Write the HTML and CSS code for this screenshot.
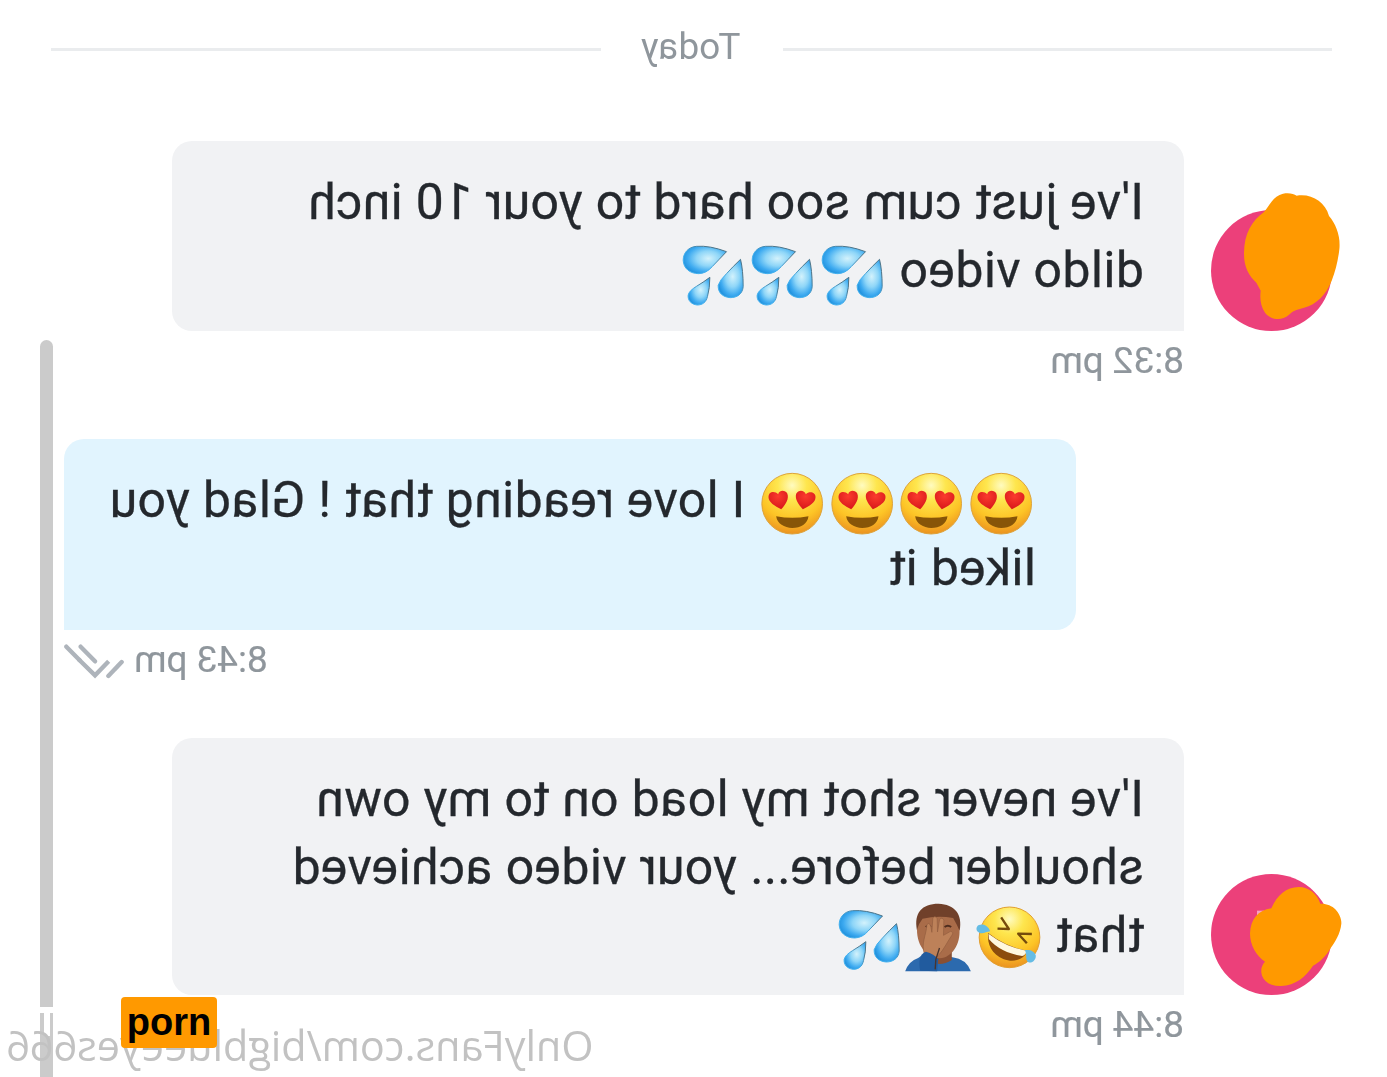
FILE: index.html
```html
<!DOCTYPE html>
<html lang="en">
<head>
<meta charset="utf-8">
<title>Chat</title>
<link rel="stylesheet" href="styles.css">
</head>
<body>
<svg class="defs" width="0" height="0">
  <defs>
    <radialGradient id="gDrop" cx="0.58" cy="0.45" r="0.6"><stop offset="0" stop-color="#d3f2fc"/><stop offset="0.45" stop-color="#8fd6f8"/><stop offset="0.8" stop-color="#3daaf0"/><stop offset="1" stop-color="#2494df"/></radialGradient>
    <linearGradient id="gEdge" x1="0" y1="1" x2="1" y2="0"><stop offset="0.4" stop-color="#41b0ee"/><stop offset="0.75" stop-color="#4e7487"/></linearGradient>
    <radialGradient id="gFace" cx="0.5" cy="0.2" r="0.8"><stop offset="0" stop-color="#fffbc0"/><stop offset="0.3" stop-color="#fee64e"/><stop offset="0.7" stop-color="#fdc426"/><stop offset="1" stop-color="#eb9220"/></radialGradient>
    <radialGradient id="gHeart" cx="0.5" cy="0.3" r="0.7"><stop offset="0" stop-color="#fb3b2d"/><stop offset="1" stop-color="#d8171b"/></radialGradient>
    <g id="drops" fill="url(#gDrop)" stroke="url(#gEdge)" stroke-width="3" stroke-linejoin="round">
      <path d="M165 50Q115 31 75 34C50 36 35 54 35 76C36 101 56 116 82 116Q105 115 122 95Q140 76 165 50Z"/>
      <path d="M207 73Q215 105 215 155C213 177 197 188 176 188C153 186 139 173 140 151Q145 135 165 116Q185 94 207 73Z"/>
      <path d="M115 127Q115 160 108 184C104 202 93 210 77 210C59 208 48 196 50 180Q53 167 75 154Q95 142 115 127Z"/>
    </g>
    <g id="love">
      <circle cx="125" cy="131" r="91" fill="url(#gFace)" stroke="#dda33c" stroke-width="3"/>
      <path d="M92 148C72 138 54 127 54 112C53 95 72 91 83 103C84 90 104 88 110 100C117 116 105 134 92 148Z" fill="url(#gHeart)"/>
      <path d="M157 148C144 134 132 116 137 101C144 88 162 90 166 103C177 92 195 97 195 112C195 128 176 138 157 148Z" fill="url(#gHeart)"/>
      <path d="M77 169Q125 178 174 169C171 192 151 204 125 204C101 203 80 192 77 169Z" fill="#875508"/>
    </g>
  </defs>
</svg>
<main class="chat">
  <div class="day"><span class="rule"></span><span class="day-name">Today</span><span class="rule"></span></div>

  <section class="message incoming">
    <div class="row">
      <div class="avatar">
        <svg class="blob" viewBox="49 88 363 363"><path fill="#ff9900" d="M208 94C222 77 235 46 265 39C283 36 297 39 306 45C350 38 390 62 403 106C424 130 438 168 434 206C430 240 423 268 411 300C393 344 365 371 328 381C306 387 294 390 283 402C259 423 228 417 211 396C198 377 195 354 198 330L185 306C162 286 148 259 148 220C147 161 171 120 208 94Z"/></svg>
      </div>
      <div class="bubble"><p>I've just cum soo hard to your 10 inch<br>dildo video <svg class="emoji" viewBox="21 18 208.5 204"><use href="#drops"/></svg><svg class="emoji" viewBox="21 18 208.5 204"><use href="#drops"/></svg><svg class="emoji" viewBox="21 18 208.5 204"><use href="#drops"/></svg></p></div>
    </div>
    <div class="meta">8:32 pm</div>
  </section>

  <section class="message outgoing">
    <div class="row">
      <div class="bubble"><p><svg class="emoji" viewBox="21 33 208.5 204"><use href="#love"/></svg><svg class="emoji" viewBox="21 33 208.5 204"><use href="#love"/></svg><svg class="emoji" viewBox="21 33 208.5 204"><use href="#love"/></svg><svg class="emoji" viewBox="21 33 208.5 204"><use href="#love"/></svg> I love reading that ! Glad you<br>liked it</p></div>
    </div>
    <div class="meta">8:43 pm<svg class="ticks" viewBox="102 132 180 105" fill="none" stroke="#aeb4bb" stroke-width="13"><path stroke-linecap="round" d="M109 140L149 181M152 140L195 184M275 186L235 228"/><path d="M145 177L195 226L236 184"/></svg></div>
  </section>

  <section class="message incoming">
    <div class="row">
      <div class="avatar">
        <svg class="blob" viewBox="49 40 363 363"><path fill="#f7a1c3" d="M187 150H208V165H187Z"/><path fill="#ff9900" d="M230 143C247 102 275 80 312 79C343 79 366 99 377 129C412 127 439 154 440 189C437 220 420 244 408 262C394 286 375 305 355 315C333 349 302 374 259 376C219 377 196 354 200 324C202 315 205 309 211 303C183 286 166 252 166 218C167 176 190 148 230 143Z"/></svg>
      </div>
      <div class="bubble"><p>I've never shot my load on to my own<br>shoulder before... your video achieved<br>that <svg class="emoji" viewBox="441 31 208.5 204">
        <circle cx="549" cy="125" r="91" fill="url(#gFace)" stroke="#e19f31" stroke-width="3"/>
        <path d="M524 65L547 100L513 99M616 115L575 114L601 143" fill="none" stroke="#754b0c" stroke-width="7" stroke-linejoin="round"/>
        <path d="M485 112Q536 153 603 166C590 193 562 202 530 190C496 176 481 146 485 112Z" fill="#8c4c0d"/>
        <path d="M486 114Q536 153 602 166Q596 179 587 181Q520 170 487 130Z" fill="#fff8df"/>
        <path d="M491 107C484 88 470 83 457 88C446 94 448 108 460 112C470 115 480 108 491 107ZM595 164C608 160 624 166 628 180C628 193 617 203 606 200C594 195 603 177 595 164Z" fill="#65bce4"/>
      </svg><svg class="emoji" viewBox="237 31 208.5 204">
        <path d="M242 227Q252 197 281 187L306 170L384 185Q425 190 439 227Z" fill="#2c6aae"/>
        <path d="M300 150H382V193Q342 218 304 190Z" fill="#895034"/>
        <path d="M278 91C281 45 307 30 342 30C382 31 405 55 405 101C408 147 381 186 346 188C303 185 273 147 278 91Z" fill="#a96c49"/>
        <path d="M277 103C267 52 292 24 342 24C391 26 414 55 405 105Q398 88 386 67Q340 58 294 69Q283 82 277 103Z" fill="#70402a"/>
        <path d="M304 94Q311 87 319 94M360 94Q370 86 380 94" fill="none" stroke="#4f2d1e" stroke-width="6"/>
        <path d="M300 175C288 145 306 116 307 88Q313 77 319 92L322 110L325 67Q332 58 338 69L339 109L345 72Q353 62 358 74L357 119L378 107Q389 109 382 119C367 140 355 170 332 187Z" fill="#bd8159" stroke="#935d3f" stroke-width="2"/>
        <path d="M287 225C281 196 286 174 304 168Q329 174 341 191L338 227Z" fill="#215b9e"/>
        <path d="M345 157L334 191L332 221" fill="none" stroke="#49342e" stroke-width="4"/>
      </svg><svg class="emoji" viewBox="21 20 208.5 204"><use href="#drops"/></svg></p></div>
    </div>
    <div class="meta">8:44 pm</div>
  </section>

  <div class="scrollbar"><span class="notch"></span><span class="slot"></span></div>
  <div class="watermark">OnlyFans.com/bigblueeyes666</div>
  <div class="badge">porn</div>
</main>
</body>
</html>
```
FILE: styles.css
```css
* { box-sizing: border-box; }

body {
  margin: 0;
  background: #fff;
  font-family: Roboto, "Liberation Sans", sans-serif;
  overflow: hidden;
}

.defs { position: absolute; }

/* The whole conversation is flipped horizontally. */
.chat {
  position: relative;
  width: 1387px;
  height: 1077px;
  padding: 17px 51px 0 54.5px;
  overflow: hidden;
  transform: scaleX(-1);
}

.day {
  display: flex;
  align-items: center;
  height: 64px;
  margin-bottom: 60px;
}

.rule {
  flex: 1;
  height: 3px;
  background: #eaecee;
}

.day-name {
  width: 182px;
  text-align: center;
  font-size: 37px;
  line-height: 60px;
  padding: 0 0 4px 2px;
  color: #8f969c;
}

.message { margin-bottom: 48px; }

.row {
  display: flex;
  align-items: flex-end;
  gap: 27.5px;
}

.outgoing .row { padding-left: 256.5px; }

.avatar {
  flex: none;
  width: 121px;
  height: 121px;
  border-radius: 50%;
  background: #ec407a;
}

.blob {
  display: block;
  width: 121px;
  height: 121px;
  overflow: visible;
  transform: scaleX(-1);
}

.bubble {
  width: 1012px;
  padding: 27px 0 27px 40px;
  border-radius: 20px 20px 20px 0;
  background: #f1f2f4;
}

.message:nth-of-type(3) .bubble { padding-bottom: 26px; }

.outgoing .bubble {
  padding-bottom: 28px;
  border-radius: 20px 20px 0 20px;
  background: #e1f4fe;
}

.bubble p {
  margin: 0;
  font-size: 50px;
  line-height: 68px;
  letter-spacing: 0.32px;
  -webkit-text-stroke: 0.3px #24282d;
  white-space: nowrap;
  color: #24282d;
}

.emoji {
  width: 69.5px;
  height: 68px;
  margin: -8px 0;
  vertical-align: -14px;
  overflow: visible;
  transform: scaleX(-1);
}

.meta {
  display: flex;
  align-items: center;
  height: 60px;
  padding-left: 148.5px;
  font-size: 37px;
  line-height: 60px;
  -webkit-text-stroke: 0.2px #8f969c;
  color: #8f969c;
}

.outgoing .meta {
  justify-content: flex-end;
  padding: 0 13px 0 0;
}

.ticks {
  width: 60px;
  height: 35px;
  margin: 2px 0 0 10px;
  transform: scaleX(-1);
}

.scrollbar {
  position: absolute;
  top: 340px;
  right: 40px;
  bottom: 0;
  width: 13px;
  padding-top: 667px;
  border-radius: 7px 7px 0 0;
  background: #cbcbcb;
}

.notch, .slot {
  display: block;
  background: #fff;
}

.notch { height: 6px; }

.slot {
  width: 6px;
  height: 23px;
  margin-left: 3px;
}

.watermark {
  position: absolute;
  left: 793.5px;
  top: 1015px;
  font-family: "Open Sans", "Noto Sans", sans-serif;
  font-size: 41.35px;
  line-height: 60px;
  white-space: nowrap;
  color: #c2c2c2;
}

.badge {
  position: absolute;
  right: 121px;
  top: 997px;
  width: 96px;
  height: 51px;
  border-radius: 4px;
  background: #ff9900;
  font: bold 38px/51px "Liberation Sans", sans-serif;
  text-align: center;
  color: #000;
  transform: scaleX(-1);
}
```
